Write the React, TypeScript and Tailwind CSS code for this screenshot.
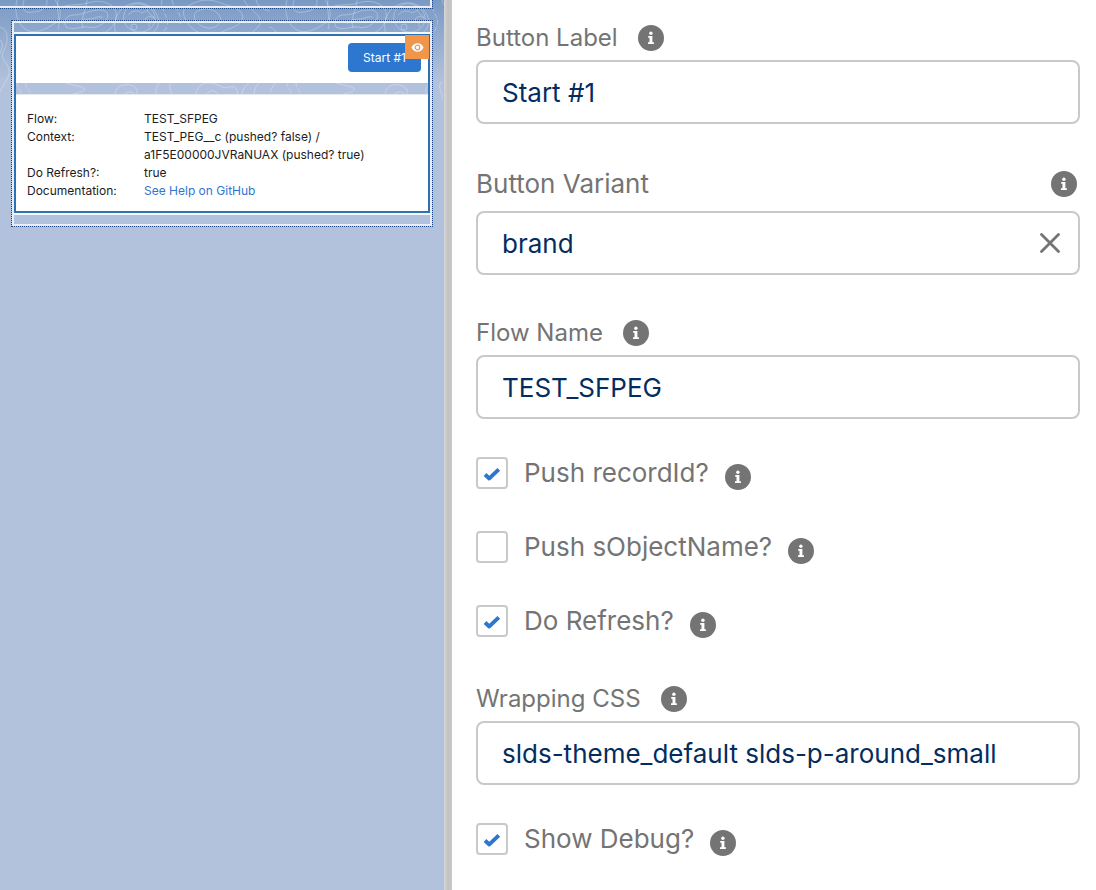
import React, { useId, useState } from "react";

function InfoIcon() {
  return (
    <svg viewBox="0 0 26 26" className="size-[26px] shrink-0" aria-hidden="true">
      <circle cx="13" cy="13" r="13" fill="#747474" />
      <circle cx="12.9" cy="8.3" r="1.7" fill="#fff" />
      <path d="M10.2 11h4.2v6.3h1.500v1.800H10v-1.800h1.500v-4.500h-1.300z" fill="#fff" />
    </svg>
  );
}

function Info({ name }: { name: string }) {
  return (
    <button type="button" aria-label={`Help for ${name}`} className="shrink-0 rounded-full">
      <InfoIcon />
    </button>
  );
}

function TextField({
  label,
  value,
  clearable = false,
  className,
}: {
  label: string;
  value: string;
  clearable?: boolean;
  className: string;
}) {
  const id = useId();
  const [text, setText] = useState(value);
  return (
    <div className={className}>
      <div
        className={
          clearable
            ? "mb-[11px] flex h-8 items-center justify-between pr-[3px] text-[26px]"
            : "mb-1.5 flex h-8 items-center gap-5 text-2xl"
        }
      >
        <label htmlFor={id} className="leading-8 text-[#747474]">
          {label}
        </label>
        <Info name={label} />
      </div>
      <div className="flex h-16 items-center rounded-lg border-2 border-[#c9c9c9] bg-white pr-4">
        <input
          id={id}
          value={text}
          onChange={(e) => setText(e.target.value)}
          className="h-full min-w-0 grow bg-transparent pl-6 text-[26px] text-[#032d60] outline-none"
        />
        {clearable && (
          <button type="button" aria-label="Clear" onClick={() => setText("")} className="p-0.5">
            <svg viewBox="0 0 20 20" className="size-5" fill="none" stroke="#747474" strokeWidth="2.8" strokeLinecap="round">
              <path d="M1.5 1.5l17 17M18.5 1.5l-17 17" />
            </svg>
          </button>
        )}
      </div>
    </div>
  );
}

function CheckField({ label, checked, className }: { label: string; checked: boolean; className: string }) {
  const [on, setOn] = useState(checked);
  return (
    <div className={`flex h-8 items-center gap-4 ${className}`}>
      <label className="flex items-center gap-4 text-[26px] leading-8 text-[#747474]">
        <span className="grid size-8">
          <input
            type="checkbox"
            checked={on}
            onChange={(e) => setOn(e.target.checked)}
            className="col-start-1 row-start-1 size-8 appearance-none rounded border-2 border-[#c9c9c9] bg-white"
          />
          {on && (
            <svg viewBox="0 0 32 32" className="pointer-events-none col-start-1 row-start-1 size-8">
              <path d="M9 17.6l4.300 3.800L22.800 12.400" fill="none" stroke="#2e77d0" strokeWidth="4" strokeLinejoin="round" />
            </svg>
          )}
        </span>
        {label}
      </label>
      <div className="flex pt-2">
        <Info name={label} />
      </div>
    </div>
  );
}

function Contours() {
  return (
    <svg className="absolute inset-x-0 top-0 h-28 w-full" aria-hidden="true">
      <defs>
        <pattern id="topo" width="270" height="112" patternUnits="userSpaceOnUse">
          <g fill="none" stroke="#fff" strokeOpacity="0.28" strokeWidth="1">
            <path d="M17 0c-3 12 0 26 12 31 10 3 20-4 28-9 6-5 3-16-2-22" />
            <path d="M24 0c-3 9 1 14 9 12 8 0 15-5 14-12" />
            <path d="M0 27c10 3 8 17 3 25-4 8 8 12 6 22-2 8-7 12-9 18M0 40c5 4 1 10-1 16" />
            <path d="M58 29c3-9-2-19 0-29M87 0c-1 10-7 20-4 28M10 44c6 5 3 16 11 22" />
            <path d="M66 27c-4-7 2-13 10-12 9-1 14-5 22-5 9-1 12 5 8 10-4 6-12 9-18 7-8-1-14 4-22 0z" />
            <path d="M77 24c3-4 8-5 14-5 6-1 8-4 12-1" />
            <path d="M60 8c9-5 20-2 28-5 8-3 20-2 25 4 6 6 3 16-2 21-4 4-8 6-12 6" />
            <path d="M116 34c-4-12 1-25 14-30 12-4 25 2 28 14 2 8-2 13-8 17" />
            <path d="M124 14c2-7 8-11 16-10 9 1 16 8 15 16-1 8-9 13-17 12-9-1-16-8-14-18z" />
            <path d="M128 15c5-5 10-5 14-2l6-3c-1 4 4 4 6 8-5-3-8-1-9 2 3 1 5 3 4 7" />
            <circle cx="134" cy="27" r="3" />
            <path d="M162 0c-3 10 8 16 5 26-2 6-5 8-9 10M172 0c1 8 11 13 8 24" strokeDasharray="5 2" />
            <path d="M186 7c10-6 20-9 32-5 12 5 22 4 25 15-2 10-12 10-21 15-11 5-23 3-30-4-6-6-12-15-6-21z" />
            <path d="M196 12c8-5 17-4 22 2 6 6 1 13-7 14-9 1-21-8-15-16z" />
            <path d="M244 0c3 8 14 12 16 20 2 7-8 10-10 17M256 0c1 6 8 10 14 11" />
            <path d="M17 82c0 7 6 10 6 17M26 82c-1 9 8 9 8 19" strokeDasharray="5 2" />
            <path d="M64 82c8 4 22 4 20 8-3 4-14 3-23 9" />
            <path d="M117 98c-5-8 3-15 13-13 10 3 8 9 3 15M122 98c2-7 12-9 14 0M161 82c-7 5-6 10-2 17M171 82c-4 7 2 9 1 17" />
            <path d="M196 97c-1-9 6-15 14-14 8 0 13 7 19 4 7-2 10 4 8 11M204 98c5-9 11-10 16-1M250 82c-8 6-9 12-8 17M261 82c-8 5-6 10-8 17" />
          </g>
        </pattern>
      </defs>
      <rect width="100%" height="100%" fill="url(#topo)" />
    </svg>
  );
}

function DebugRow({ term, children }: { term: string; children: React.ReactNode }) {
  return (
    <div className="flex">
      <dt className="w-[117px] shrink-0">{term}</dt>
      <dd className="w-60">{children}</dd>
    </div>
  );
}

function Preview() {
  return (
    <section className="relative w-[444px] shrink-0 bg-linear-to-b from-[#7999c4] to-[#b2c1dc] to-[80px]">
      <Contours />
      <div className="relative">
        <div className="mr-[11px] h-[9px] border-r border-b border-dotted border-[#1d4382]">
          <div className="h-full border-r-2 border-b-2 border-[#e9eef5]" />
        </div>
        <div className="mx-[11px] mt-[11px] border border-dotted border-[#1d4382]">
          <div className="border-2 border-[#e9eef5]">
            <div className="h-[9px]" />
            <div className="border-y-2 border-[#f4f7fb]">
              <div className="relative border-2 border-[#2f71b5]">
                <div className="flex h-[47px] items-start justify-end bg-white pt-[7px] pr-[7px]">
                  <button type="button" className="h-[29px] rounded bg-[#2e77d0] px-[15px] text-xs text-white">
                    Start #1
                  </button>
                </div>
                <div className="h-3 border-b border-[#e4e8f1]" />
                <dl className="bg-white px-[11px] pt-[15px] pb-[11px] text-xs leading-[18px] text-[#1c1c1c]">
                  <DebugRow term="Flow:">TEST_SFPEG</DebugRow>
                  <DebugRow term="Context:">TEST_PEG__c (pushed? false) / a1F5E00000JVRaNUAX (pushed? true)</DebugRow>
                  <DebugRow term="Do Refresh?:">true</DebugRow>
                  <DebugRow term="Documentation:">
                    <a href="#help" className="text-[#2e77d0]">
                      See Help on GitHub
                    </a>
                  </DebugRow>
                </dl>
                <div className="absolute -top-px -right-px flex size-6 items-center justify-center bg-[#f0964b]">
                  <svg viewBox="0 0 14 10" className="h-[9px] w-[13px]" aria-hidden="true">
                    <path d="M0.3 5C2 1.7 4.3.3 7 .3S12 1.7 13.7 5C12 8.3 9.700 9.700 7 9.700S2 8.300.3 5z" fill="#fff" />
                    <circle cx="7" cy="5" r="2.600" fill="none" stroke="#f0964b" strokeWidth="1.300" />
                  </svg>
                </div>
              </div>
            </div>
            <div className="h-[9px]" />
          </div>
        </div>
      </div>
    </section>
  );
}

export default function App() {
  return (
    <main className="flex min-h-screen bg-white font-['Inter',sans-serif]">
      <Preview />
      <div className="w-2 shrink-0 bg-linear-to-r from-[#d6d6d6] via-[#c2c2c2] to-[#c9c9c9]" />
      <form className="min-w-0 grow pt-[22px] pr-4 pl-6">
        <TextField label="Button Label" value="Start #1" className="" />
        <TextField label="Button Variant" value="brand" clearable className="mt-11" />
        <TextField label="Flow Name" value="TEST_SFPEG" className="mt-[42px]" />
        <CheckField label="Push recordId?" checked className="mt-[38px]" />
        <CheckField label="Push sObjectName?" checked={false} className="mt-[42px]" />
        <CheckField label="Do Refresh?" checked className="mt-[42px]" />
        <TextField label="Wrapping CSS" value="slds-theme_default slds-p-around_small" className="mt-[46px]" />
        <CheckField label="Show Debug?" checked className="mt-[38px]" />
      </form>
    </main>
  );
}
